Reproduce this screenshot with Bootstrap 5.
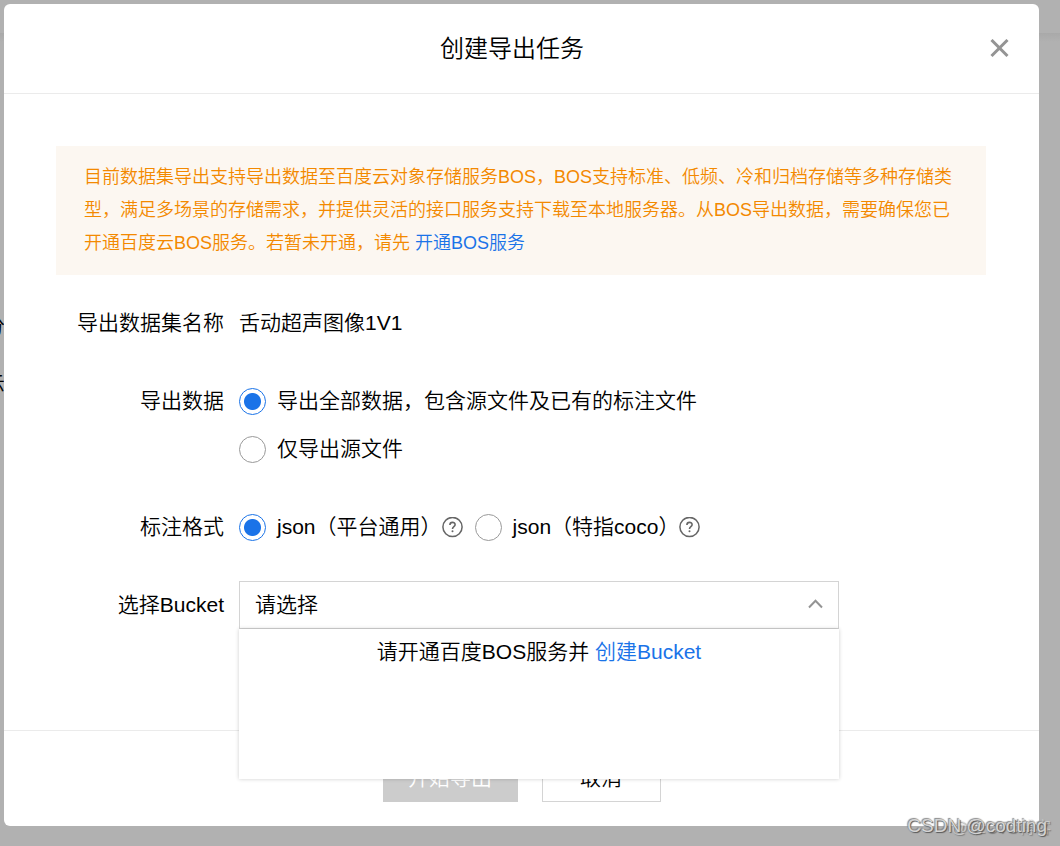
<!DOCTYPE html>
<html lang="zh-CN">
<head>
<meta charset="utf-8">
<meta name="viewport" content="width=device-width, initial-scale=1">
<title>创建导出任务</title>
<link href="https://cdn.jsdelivr.net/npm/bootstrap@5.3.0/dist/css/bootstrap.min.css" rel="stylesheet">
<style>
  body { background: #b1b1b1; color: #000; font: 350 21px/30px "Liberation Sans", "Noto Sans CJK SC", sans-serif; overflow-x: hidden; }
  a { color: #1a73e8; text-decoration: none; }
  /* dimmed page behind the dialog */
  .backdrop-page { inset: 0; z-index: -1; }
  .backdrop-bar { height: 33px; }
  .backdrop-shade { height: 9px; background: linear-gradient(#a9a9a9, #b1b1b1); }
  .backdrop-texts { top: 311px; left: 0; width: 5px; overflow: hidden; gap: 28px; }
  .export-dialog { margin: 4px 21px 20px 4px; border-radius: 6px; }
  .dialog-head { padding: 0 30px; height: 90px; border-bottom: 1px solid #ebebeb; }
  .dialog-head h1 { font-size: 24px; line-height: 36px; font-weight: inherit; }
  .close-btn { width: 19px; height: 19px; }
  .dialog-main { padding: 52px 53px 101px 52px; }
  .notice { background: #fcf7f1; color: #f38900; padding: 15px 28px; font-size: 18px; line-height: 33px; margin-bottom: 24px; }
  .form-lines { gap: 30px; }
  .form-line { gap: 15px; }
  .line-label { width: 168px; line-height: 48px; flex: none; text-align: right; font-weight: inherit; }
  .option-line { min-height: 48px; }
  .option-line label { padding-left: 11px; }
  .round-radio { appearance: none; width: 27px; height: 27px; margin: 0; border: 1px solid #999; border-radius: 50%; flex: none; background: #fff; }
  .round-radio:checked { border-color: #1a73e8; background: radial-gradient(circle, #1a73e8 8px, #fff 9px); }
  .help-btn { width: 21px; height: 21px; margin-right: 12px; }
  .bucket-box { width: 600px; min-width: 0; }
  .bucket-box select { appearance: none; height: 48px; border: 1px solid #d4d4d4; padding: 0 15px; background: #fff; color: #000; font: inherit; }
  .bucket-arrow { right: 16px; top: 18px; pointer-events: none; }
  .bucket-menu { top: 48px; left: 0; height: 150px; padding-top: 8px; box-shadow: 0 0 4px rgba(0,0,0,.2); z-index: 2; }
  .dialog-foot { border-top: 1px solid #ebebeb; padding: 23px 0 24px; gap: 24px; }
  .foot-btn { height: 48px; border: 1px solid #d4d4d4; border-radius: 0; font: inherit; padding: 0; color: #000; background: #fff; width: 119px; }
  .foot-btn.start { width: 135px; }
  .foot-btn.start:disabled { background: #ccc; border-color: #ccc; color: #fff; opacity: 1; }
  .watermark { right: 13px; bottom: 8px; font-size: 19px; line-height: 24px; color: #d4d4d4; text-shadow: 1px 1px 1px #555, -1px -1px 1px #888; z-index: 3; }
  .watermark-back { right: 9px; bottom: 6px; font-size: 16px; line-height: 24px; color: rgba(225,225,225,.6); text-shadow: 1px 1px 1px rgba(90,90,90,.6); z-index: 3; }
</style>
</head>
<body class="position-relative min-vh-100">
<div class="backdrop-page position-absolute" aria-hidden="true">
  <div class="backdrop-bar"></div>
  <div class="backdrop-shade"></div>
  <div class="backdrop-texts position-absolute d-flex flex-column align-items-end"><span>分</span><span>示</span></div>
</div>

<main class="export-dialog bg-white" role="dialog" aria-labelledby="dialog-title">
  <header class="dialog-head d-flex align-items-center">
    <h1 id="dialog-title" class="flex-grow-1 text-center m-0">创建导出任务</h1>
    <button type="button" class="close-btn btn p-0 border-0 d-flex" aria-label="关闭">
      <svg width="19" height="19" viewBox="0 0 19 19" fill="none" stroke="#949494" stroke-width="3"><path d="M1.5 1 17.500 17M17.500 1 1.500 17"/></svg>
    </button>
  </header>

  <form>
    <div class="dialog-main">
      <div class="notice">目前数据集导出支持导出数据至百度云对象存储服务BOS，BOS支持标准、低频、冷和归档存储等多种存储类型，满足多场景的存储需求，并提供灵活的接口服务支持下载至本地服务器。从BOS导出数据，需要确保您已开通百度云BOS服务。若暂未开通，请先 <a href="#">开通BOS服务</a></div>

      <div class="form-lines d-flex flex-column">
        <div class="form-line d-flex">
          <span class="line-label">导出数据集名称</span>
          <div class="option-line d-flex align-items-center">舌动超声图像1V1</div>
        </div>

        <div class="form-line d-flex" role="radiogroup" aria-labelledby="range-label">
          <span class="line-label" id="range-label">导出数据</span>
          <div>
            <div class="option-line d-flex align-items-center">
              <input class="round-radio" type="radio" name="range" id="range-all" checked>
              <label for="range-all">导出全部数据，包含源文件及已有的标注文件</label>
            </div>
            <div class="option-line d-flex align-items-center">
              <input class="round-radio" type="radio" name="range" id="range-src">
              <label for="range-src">仅导出源文件</label>
            </div>
          </div>
        </div>

        <div class="form-line d-flex" role="radiogroup" aria-labelledby="format-label">
          <span class="line-label" id="format-label">标注格式</span>
          <div class="option-line d-flex align-items-center flex-wrap">
            <input class="round-radio" type="radio" name="format" id="format-json" checked>
            <label for="format-json">json（平台通用）</label>
            <button type="button" class="help-btn btn p-0 border-0 d-flex" aria-label="平台通用格式说明">
              <svg width="21" height="21" viewBox="0 0 21 21" fill="none" stroke="#666" stroke-width="1.500"><circle cx="10.500" cy="10" r="9.600"/><path d="M7.900 8C7.900 4.500 13.100 4.600 13.100 7.800C13.100 9.700 10.500 9.800 10.500 12" stroke-width="1.600"/><circle cx="10.500" cy="14.200" r="1" fill="#666" stroke="none"/></svg>
            </button>
            <input class="round-radio" type="radio" name="format" id="format-coco">
            <label for="format-coco">json（特指coco）</label>
            <button type="button" class="help-btn btn p-0 border-0 d-flex" aria-label="coco 格式说明">
              <svg width="21" height="21" viewBox="0 0 21 21" fill="none" stroke="#666" stroke-width="1.500"><circle cx="10.500" cy="10" r="9.600"/><path d="M7.900 8C7.900 4.500 13.100 4.600 13.100 7.800C13.100 9.700 10.500 9.800 10.500 12" stroke-width="1.600"/><circle cx="10.500" cy="14.200" r="1" fill="#666" stroke="none"/></svg>
            </button>
          </div>
        </div>

        <div class="form-line d-flex">
          <label class="line-label" for="bucket">选择Bucket</label>
          <div class="bucket-box position-relative">
            <select id="bucket" class="w-100 d-block rounded-0"><option>请选择</option></select>
            <svg class="bucket-arrow position-absolute" width="15" height="10" viewBox="0 0 15 10" fill="none" stroke="#949494" stroke-width="2"><path d="M1 8.500 7.500 1.800 14 8.500"/></svg>
            <div class="bucket-menu position-absolute w-100 bg-white text-center">请开通百度BOS服务并 <a href="#">创建Bucket</a></div>
          </div>
        </div>
      </div>
    </div>

    <footer class="dialog-foot d-flex justify-content-center">
      <button type="submit" class="foot-btn start btn" disabled>开始导出</button>
      <button type="button" class="foot-btn btn">取消</button>
    </footer>
  </form>
</main>
<div class="watermark-back position-absolute">@51CTO博客</div>
<div class="watermark position-absolute">CSDN @codting</div>
<script src="https://cdn.jsdelivr.net/npm/bootstrap@5.3.0/dist/js/bootstrap.bundle.min.js"></script>
</body>
</html>
